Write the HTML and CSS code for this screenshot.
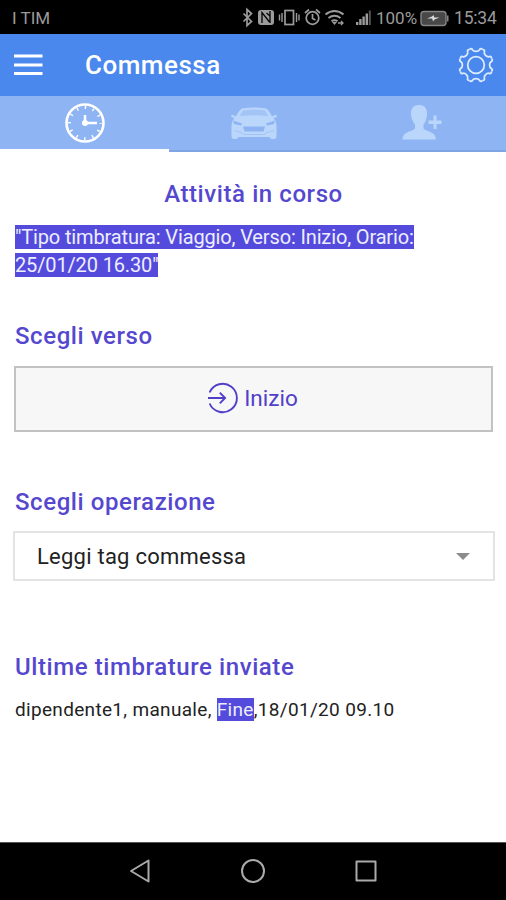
FILE: index.html
```html
<!DOCTYPE html>
<html lang="it">
<head>
<meta charset="utf-8">
<title>Commessa</title>
<link rel="stylesheet" href="styles.css">
</head>
<body>
<div class="status">
  <span class="carrier">I TIM</span>
  <svg class="status-icons" width="136" height="22" viewBox="240 7 136 22" fill="none" stroke="#9b9b9b" stroke-width="1.7">
    <path d="M243.500 13.500l8 8-4.500 4v-16l4.500 4-8 8"/>
    <rect x="258" y="10" width="16" height="15" rx="3" fill="#9b9b9b" stroke="none"/>
    <path d="M262 23V12.500l7.500 9.500M266.500 13l3.500 3V23M270 11v11" stroke="#000" stroke-width="1.300"/>
    <rect x="285" y="10.500" width="8.500" height="14"/>
    <path d="M282 13v9M296.500 13v9M279.500 14.500v6M299 14.500v6" stroke-width="1.400"/>
    <circle cx="312.500" cy="18" r="6.300"/>
    <path d="M312.500 14v4.500l3 1.500M305 13l4-3.500M320 13l-4-3.500"/>
    <path d="M325.500 14.500q9-7 18 0M328.500 18q6-4.500 12 0M331.500 21.200q3-2 6 0" stroke-width="2"/>
    <path d="M332 22h5l-2.500 3z" fill="#9b9b9b" stroke="none"/>
    <path d="M338 23h5M341 21l2 2-2 2" stroke-width="1.300"/>
    <path d="M356 25v-3h2.400v3zM359.200 25v-6h2.400v6zM362.400 25v-8.500h2.400V25zM365.600 25V13.500h2.400V25z" fill="#9b9b9b" stroke="none"/>
    <path d="M368.800 25V10.500h2V25z" fill="#555" stroke="none"/>
  </svg>
  <span class="percent">100%</span>
  <svg class="battery" width="30" height="18" viewBox="0 0 30 18">
    <rect x="1" y="2.500" width="25" height="14" rx="3" fill="#484848" stroke="#858585" stroke-width="1.400"/>
    <path d="M27 6.500h1.500v6H27z" fill="#858585"/>
    <path d="M7 9.500l5-2 1.500-1.500.8 2.500h5.200l-5 2-1.500 2-.8-3z" fill="#ddd"/>
  </svg>
  <span class="time">15:34</span>
</div>
<header class="appbar">
  <svg class="menu" width="29" height="22" viewBox="0 0 29 22"><path d="M0 2h28.500M0 11h28.500M0 19.500h28.500" stroke="#fff" stroke-width="3"/></svg>
  <h1>Commessa</h1>
  <svg class="gear" width="36" height="36" viewBox="-18 -18 36 36" fill="none" stroke="#dcebff" stroke-width="1.800" stroke-linejoin="round">
    <defs><path id="tooth" d="M-6.500-15.700L-4.900-16.300Q-3.900-16.400-3.400-15.200Q-2.600-13.600 0-13.600Q2.600-13.600 3.400-15.200Q3.900-16.400 4.900-16.300L6.500-15.700"/></defs>
    <use href="#tooth"/><use href="#tooth" transform="rotate(45)"/><use href="#tooth" transform="rotate(90)"/><use href="#tooth" transform="rotate(135)"/>
    <use href="#tooth" transform="rotate(180)"/><use href="#tooth" transform="rotate(225)"/><use href="#tooth" transform="rotate(270)"/><use href="#tooth" transform="rotate(315)"/>
    <circle r="8.300"/>
  </svg>
</header>
<nav class="tabs">
  <div class="tab active">
    <svg width="42" height="42" viewBox="-21 -21 42 42" fill="none" stroke="#fff">
      <circle r="18.500" stroke-width="2.600"/>
      <circle r="15.500" stroke-width="3" stroke-dasharray="1.400 6.716" stroke-dashoffset=".7"/>
      <path d="M0-8V0h12" stroke-width="2.500"/>
      <circle r="3" fill="#fff" stroke="none"/>
    </svg>
  </div>
  <div class="tab">
    <svg width="48" height="34" viewBox="0 0 48 34">
      <path d="M6 10.500Q9 4 12 2.500Q24 .5 36 2.500Q39 4 42 10.500L46 8.500 47 11 43.500 12Q46.500 15 46.500 19V30Q46.500 33 44 33H42Q40 33 39.500 31H8.500Q8 33 6 33H4Q1.500 33 1.500 30V19Q1.500 15 4.500 12L1 11 2 8.500z" fill="#bad6fb"/>
      <path d="M9.500 10L13 4.500Q24 2.500 35 4.500L38.500 10Q24 8.500 9.500 10z" fill="#a3c4f7"/>
      <path d="M3 14.500L12 17.500 11 19.500 4 18zM45 14.500L36 17.500 37 19.500 44 18zM13 20.500H35L33.500 25.500H14.500z" fill="#8eb3f3"/>
      <path d="M4 24.500L11 26.500 14 28.500H34L37 26.500 44 24.500" fill="none" stroke="#a3c4f7"/>
    </svg>
  </div>
  <div class="tab">
    <svg width="42" height="36" viewBox="0 0 42 36" fill="#bad6fb">
      <path d="M18 0c6 0 8.500 4 8 10-.3 4-1.500 7-3.500 9.500v4c3 3.500 12.500 2.500 12.500 11H1.500c0-8.500 9.500-7.500 12.500-11v-4C12 17 10.300 14 10 10 9.500 4 12 0 18 0z"/>
      <path d="M32.500 10.500h3v5h5v3.500h-5v5h-3v-5h-5v-3.500h5z"/>
    </svg>
  </div>
</nav>
<main>
  <h2 class="current">Attività in corso</h2>
  <p class="activity"><mark>"Tipo timbratura: Viaggio, Verso: Inizio, Orario:</mark><br><mark>25/01/20 16.30"</mark></p>
  <h2 class="direction">Scegli verso</h2>
  <button class="start">
    <svg width="32" height="32" viewBox="0 0 32 32" fill="none" stroke="#5040c8" stroke-width="1.900">
      <path d="M2.600 10.500A14.200 14.200 0 1 1 2.600 21.500M1 16H18M12.800 10.700L18.100 16l-5.300 5.300"/>
    </svg>
    <span>Inizio</span>
  </button>
  <h2 class="operation">Scegli operazione</h2>
  <div class="select"><span>Leggi tag commessa</span><i class="caret"></i></div>
  <h2 class="latest">Ultime timbrature inviate</h2>
  <p class="record">dipendente1, manuale, <mark>Fine</mark>,18/01/20 09.10</p>
</main>
<footer class="navbar">
  <svg width="24" height="26" viewBox="0 0 24 26"><path d="M3 13L20.500 2.500v21z"/></svg>
  <svg width="26" height="26" viewBox="0 0 26 26"><circle cx="13" cy="13" r="11"/></svg>
  <svg width="24" height="24" viewBox="0 0 24 24"><rect x="2.500" y="2.500" width="19" height="19"/></svg>
</footer>
</body>
</html>
```
FILE: styles.css
```css
* { box-sizing: border-box; }
body {
  margin: 0;
  width: 506px;
  height: 900px;
  display: flex;
  flex-direction: column;
  overflow: hidden;
  background: #fff;
  font-family: Roboto, "Liberation Sans", sans-serif;
}
h1, h2, p { margin: 0; white-space: nowrap; }
svg { display: block; flex: none; }
.status {
  height: 34px;
  background: #000;
  color: #9b9b9b;
  display: flex;
  align-items: center;
  padding: 2px 0 0 12px;
  font-size: 17px;
  white-space: nowrap;
}
.carrier { width: 228px; font-size: 17px; }
.percent { width: 44px; }
.battery { margin-right: 4px; }
.time { font-size: 17.500px; letter-spacing: -.2px; }
.appbar {
  height: 62px;
  background: #4a88ee;
  display: flex;
  align-items: center;
  padding: 0 12px 0 14px;
}
.appbar h1 {
  flex: 1;
  margin-left: 42px;
  color: #fff;
  font-size: 26px;
  font-weight: 500;
  letter-spacing: .5px;
}
.tabs {
  height: 56px;
  background: #8fb4f4;
  display: grid;
  grid-template-columns: 169px 169px 168px;
}
.tab {
  display: flex;
  align-items: center;
  justify-content: center;
  border-bottom: 2px solid #7fa5e6;
}
.tab.active { border-bottom: 3px solid #fff; }
main {
  height: 690px;
  padding: 0 13px;
  color: #222;
}
h2 {
  height: 32px;
  line-height: 32px;
  padding-left: 2px;
  color: #5548cf;
  font-size: 24px;
  font-weight: 500;
  letter-spacing: .58px;
}
.current { margin-top: 26px; padding-left: 1px; text-align: center; }
.activity {
  margin: 13px 0 0 2px;
  font-size: 20px;
  line-height: 28px;
  letter-spacing: -.14px;
}
mark { background: #544bdd; color: #eef; }
.direction { margin-top: 41px; }
.start {
  width: 479px;
  height: 66px;
  margin: 14px 0 0 1px;
  padding: 0 2px 2px 0;
  border: 2px solid #c2c2c2;
  background: #f7f7f7;
  display: flex;
  align-items: center;
  justify-content: center;
  gap: 5px;
  color: #5040c8;
  font-family: inherit;
  font-size: 22.500px;
}
.operation { margin-top: 54px; }
.select {
  width: 482px;
  height: 50px;
  margin-top: 13px;
  padding: 0 23px 0 22px;
  border: 2px solid #e4e4e4;
  display: flex;
  align-items: center;
  justify-content: space-between;
  font-size: 22px;
  letter-spacing: .24px;
}
.caret { border: 7px solid transparent; border-top-color: #8c8c8c; border-bottom: 0; }
.latest { margin-top: 70px; }
.record {
  margin: 14px 0 0 2px;
  font-size: 19px;
  line-height: 26px;
  letter-spacing: .32px;
}
.navbar {
  height: 58px;
  background: #000;
  border-top: 1px solid #555;
  display: flex;
  align-items: center;
  justify-content: center;
  gap: 88px;
  padding-bottom: 1px;
}
.navbar svg { fill: none; stroke: #aaa; stroke-width: 2; stroke-linejoin: round; }
```
